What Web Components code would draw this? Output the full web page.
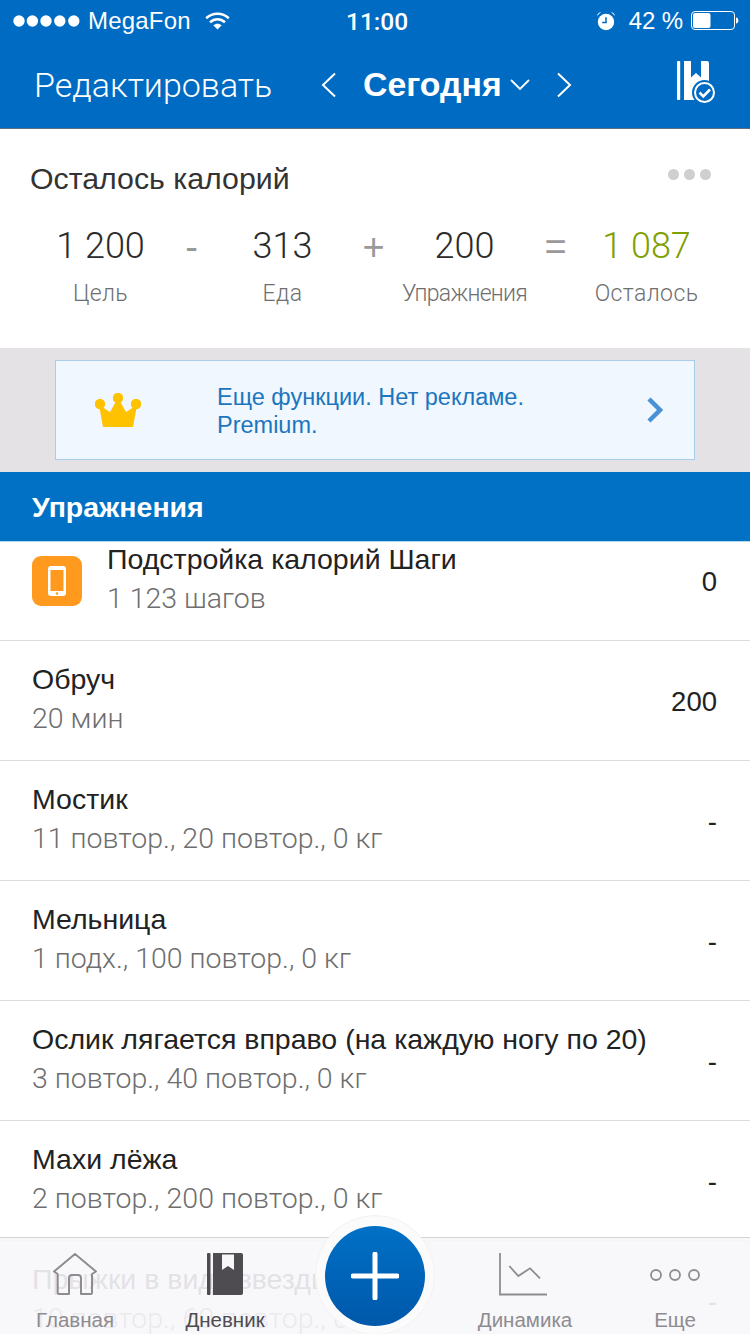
<!DOCTYPE html>
<html lang="ru">
<head>
<meta charset="utf-8">
<title>Дневник</title>
<style>
  html, body { margin: 0; padding: 0; }
  body {
    width: 750px;
    height: 1334px;
    overflow: hidden;
    position: relative;
    display: flex;
    flex-direction: column;
    background: #fff;
    font-family: "Liberation Sans", Arial, sans-serif;
  }
</style>
</head>
<body>
  <app-header></app-header>
  <calorie-summary>
    <calorie-cell value="1 200" label="Цель"></calorie-cell>
    <calorie-cell value="-" op></calorie-cell>
    <calorie-cell value="313" label="Еда"></calorie-cell>
    <calorie-cell value="+" op></calorie-cell>
    <calorie-cell value="200" label="Упражнения" style="--label-spacing: -.7px"></calorie-cell>
    <calorie-cell value="=" op></calorie-cell>
    <calorie-cell value="1 087" label="Осталось" accent></calorie-cell>
  </calorie-summary>
  <promo-banner>Еще функции. Нет рекламе.<br>Premium.</promo-banner>
  <section-header>Упражнения</section-header>
  <exercise-list>
    <exercise-row name="Подстройка калорий Шаги" detail="1 123 шагов" value="0" phone></exercise-row>
    <exercise-row name="Обруч" detail="20 мин" value="200"></exercise-row>
    <exercise-row name="Мостик" detail="11 повтор., 20 повтор., 0 кг" value="-"></exercise-row>
    <exercise-row name="Мельница" detail="1 подх., 100 повтор., 0 кг" value="-"></exercise-row>
    <exercise-row name="Ослик лягается вправо (на каждую ногу по 20)" detail="3 повтор., 40 повтор., 0 кг" value="-"></exercise-row>
    <exercise-row name="Махи лёжа" detail="2 повтор., 200 повтор., 0 кг" value="-"></exercise-row>
    <exercise-row name="Прыжки в виде звезды" detail="10 повтор., 60 повтор., 0 кг" value="-"></exercise-row>
  </exercise-list>
  <tab-bar></tab-bar>

<script>
  const define = (name, html) => {
    customElements.define(name, class extends HTMLElement {
      constructor () {
        super()
        this.attachShadow({ mode: 'open' })
        this.shadowRoot.innerHTML = typeof html === 'function' ? html(this) : html
      }
    })
  }

  define('app-header', `
    <style>
      :host { display: block; height: 129px; box-sizing: border-box; background: #006bc2; color: #fff; border-bottom: 1px solid #5c6f80; flex: none; }
      .status { display: flex; align-items: center; height: 41px; padding: 0 11px 0 13px; font-size: 24px; position: relative; }
      .carrier { margin-left: 8px; letter-spacing: .2px; }
      .wifi { margin-left: 14px; }
      .time { position: absolute; left: 346px; top: 7px; font-family: Roboto, sans-serif; font-weight: 500; font-size: 24.5px; }
      .right { margin-left: auto; display: flex; align-items: center; }
      .pct { margin: 0 8px 0 13px; letter-spacing: -.1px; }
      .nav { display: flex; align-items: center; height: 87px; padding-left: 34px; position: relative; }
      .edit { font-family: Roboto, sans-serif; font-weight: 300; font-size: 34px; width: 287px; white-space: nowrap; }
      .today { font-size: 33.8px; font-weight: 700; margin: 0 8px 0 27px; }
      .mark { position: absolute; left: 677px; top: 20px; }
      .down { margin-right: 27px; }
    </style>
    <div class="status">
      <svg width="67" height="12" viewBox="0 0 67 12" fill="#fff"><circle cx="6" cy="6" r="5.7"/><circle cx="19.4" cy="6" r="5.7"/><circle cx="33" cy="6" r="5.7"/><circle cx="46.8" cy="6" r="5.7"/><circle cx="60.8" cy="6" r="5.7"/></svg>
      <span class="carrier">MegaFon</span>
      <svg class="wifi" width="25" height="18" viewBox="0 0 25 18" fill="none" stroke="#fff" stroke-width="2.6"><path d="M1.2 6.200C7.600.2 17.400.2 23.800 6.200"/><path d="M5 10.200c4.400-4 10.600-4 15 0"/><path d="M12.500 17.600l-4.200-4.400c2.400-2.100 6-2.100 8.400 0z" fill="#fff" stroke="none"/></svg>
      <span class="time">11:00</span>
      <div class="right">
        <svg width="20" height="20" viewBox="0 0 21 21"><circle cx="10.500" cy="11.500" r="8.600" fill="#fff"/><path d="M10.500 6.500v5.500H6.500" fill="none" stroke="#006bc2" stroke-width="1.600"/><path d="M1 5.200C1.500 2.800 3.200 1.200 5.400 1zM20 5.200C19.500 2.800 17.800 1.200 15.600 1z" fill="#fff"/></svg>
        <span class="pct">42 %</span>
        <svg width="48" height="19" viewBox="0 0 48 19"><rect x=".5" y=".5" width="43" height="18" rx="3.500" fill="none" stroke="#fff"/><rect x="2" y="2" width="17.500" height="15" rx="2" fill="#fff"/><path d="M45 6.500c1.600.3 2.400 1.400 2.400 3s-.8 2.700-2.400 3z" fill="#fff"/></svg>
      </div>
    </div>
    <div class="nav">
      <span class="edit">Редактировать</span>
      <svg width="15" height="26" viewBox="0 0 15 26" fill="none" stroke="#fff" stroke-width="2"><path d="M14 1.500L2 13l12 11.500"/></svg>
      <span class="today">Сегодня</span>
      <svg class="down" width="20" height="11" viewBox="0 0 20 11" fill="none" stroke="#fff" stroke-width="1.800"><path d="M1 1l9 9 9-9"/></svg>
      <svg width="15" height="26" viewBox="0 0 15 26" fill="none" stroke="#fff" stroke-width="2"><path d="M1 1.500L13 13 1 24.500"/></svg>
      <svg class="mark" width="40" height="44" viewBox="0 0 40 44">
        <rect x="0" y="0" width="3.200" height="39" rx="1" fill="#fff"/>
        <path d="M7 0h23a2 2 0 0 1 2 2v35a2 2 0 0 1-2 2H7z" fill="#fff"/>
        <path d="M14 0h10v16.500l-5-4.500-5 4.500z" fill="#006bc2"/>
        <circle cx="27.500" cy="31.500" r="12.500" fill="#006bc2"/>
        <circle cx="27.500" cy="31.500" r="9.500" fill="#006bc2" stroke="#fff" stroke-width="2"/>
        <path d="M22.500 31.500l3.800 3.800 6.700-6.800" fill="none" stroke="#fff" stroke-width="2.600"/>
      </svg>
    </div>
  `)

  define('calorie-summary', `
    <style>
      :host { display: block; height: 219px; background: #fff; flex: none; position: relative; }
      .head { display: flex; align-items: center; justify-content: space-between; padding: 32px 39px 0 30px; height: 36px; font-size: 30.3px; color: #333; }
      .dots { display: flex; gap: 5px; margin-top: -10px; }
      .dots i { width: 11px; height: 11px; border-radius: 50%; background: #cfcfcf; }
      .cells { display: grid; grid-template-columns: repeat(7, 91px); padding: 29px 0 0 55px; }
    </style>
    <div class="head"><span>Осталось калорий</span><div class="dots"><i></i><i></i><i></i></div></div>
    <div class="cells"><slot></slot></div>
  `)

  define('calorie-cell', (el) => `
    <style>
      :host { display: flex; flex-direction: column; align-items: center; white-space: nowrap; }
      .value { font-family: Roboto, sans-serif; font-weight: 300; font-size: 36px; line-height: 40px; color: ${el.hasAttribute('accent') ? '#7fa000' : '#2b2b2b'}; }
      .op { font-family: "Liberation Sans", sans-serif; font-weight: 400; font-size: 38px; color: #999; position: relative; top: 1px; }
      .label { font-family: Roboto, sans-serif; font-weight: 300; font-size: 23px; letter-spacing: var(--label-spacing, .4px); line-height: 28px; margin-top: 14px; color: #6f6f6f; }
    </style>
    <span class="value ${el.hasAttribute('op') ? 'op' : ''}">${el.getAttribute('value')}</span>
    <span class="label">${el.getAttribute('label') || ''}</span>
  `)

  define('promo-banner', `
    <style>
      :host { display: block; height: 124px; padding: 12px 55px; box-sizing: border-box; background: #e4e2e4; flex: none; }
      .box { height: 100px; box-sizing: border-box; background: #f1f7fe; border: 1px solid #a9cde9; display: flex; align-items: center; padding-left: 39px; }
      .text { font-size: 23.500px; line-height: 28px; color: #1b76bf; margin-left: 76px; width: 430px; margin-top: 2px; }
    </style>
    <div class="box">
      <svg width="46" height="34" viewBox="0 0 46 34" fill="#fec200"><circle cx="5" cy="11" r="5.200"/><circle cx="23" cy="5" r="5.200"/><circle cx="41" cy="11" r="5.200"/><path d="M4 12l11 7 8-14 8 14 11-7-4 22H8z"/></svg>
      <div class="text"><slot></slot></div>
      <svg width="16" height="26" viewBox="0 0 16 26" fill="none" stroke="#4a90d6" stroke-width="4.500"><path d="M2 2l11 11L2 24"/></svg>
    </div>
  `)

  define('section-header', `
    <style>
      :host { display: flex; align-items: center; height: 70px; box-sizing: border-box; padding: 2px 0 0 32px; background: #0071c5; color: #fff; font-size: 28.500px; font-weight: 700; border-bottom: 1px solid #b5d8ef; flex: none; }
    </style>
    <slot></slot>
  `)

  define('exercise-list', `
    <style>
      :host { display: block; flex: 1; min-height: 0; overflow: hidden; background: #fff; }
      .scroll { margin-top: -21px; }
    </style>
    <div class="scroll"><slot></slot></div>
  `)

  define('exercise-row', (el) => `
    <style>
      :host { display: flex; align-items: center; height: 120px; box-sizing: border-box; padding: 0 33px 0 32px; border-bottom: 1px solid #dcdcdc; font-size: 28.500px; }
      .icon { flex: none; width: 50px; height: 50px; margin-right: 25px; border-radius: 9px; background: #ff9a1f; display: flex; align-items: center; justify-content: center; }
      .text { flex: 1; min-width: 0; margin-top: -3px; }
      .name { color: #222; line-height: 39px; }
      .detail { font-family: Roboto, sans-serif; font-weight: 300; color: #6e6e6e; font-size: 28.500px; line-height: 39px; }
      .value { color: #222; font-size: 27.500px; margin-top: 3px; }
    </style>
    ${el.hasAttribute('phone') ? `<div class="icon"><svg width="18" height="30" viewBox="0 0 18 30"><rect width="18" height="30" rx="3" fill="#fff"/><rect x="2.500" y="4" width="13" height="21" fill="#ff9a1f"/><circle cx="9" cy="27.500" r="1.300" fill="#ff9a1f"/></svg></div>` : ''}
    <div class="text">
      <div class="name">${el.getAttribute('name')}</div>
      <div class="detail">${el.getAttribute('detail')}</div>
    </div>
    <span class="value">${el.getAttribute('value')}</span>
  `)

  define('tab-item', (el) => `
    <style>
      :host { display: flex; flex-direction: column; align-items: center; justify-content: flex-end; width: 150px; height: 100%; box-sizing: border-box; padding-bottom: 2px; font-size: 20.500px; color: ${el.hasAttribute('active') ? '#4e4c50' : '#8e8c90'}; }
      .ic { height: 43px; display: flex; align-items: center; margin-bottom: 12px; }
      .label { line-height: 24px; }
    </style>
    <div class="ic"><slot></slot></div>
    <span class="label">${el.getAttribute('label')}</span>
  `)

  define('tab-bar', `
    <style>
      :host { position: absolute; left: 0; right: 0; bottom: 0; height: 97px; box-sizing: border-box; background: rgba(247,246,249,.9); border-top: 1px solid #d4d3d6; display: flex; }
      .gap { flex: none; width: 150px; }
      .plus { position: absolute; left: 315px; top: -23px; width: 120px; height: 120px; box-sizing: border-box; padding-top: 2px; border-radius: 50%; background: #fbfbfc; border: 1px solid #f2f2f4; display: flex; align-items: center; justify-content: center; }
      .disc { width: 100px; height: 100px; border-radius: 50%; background: linear-gradient(180deg, #0070c6, #0058aa); display: flex; align-items: center; justify-content: center; }
      .chart { margin-left: -4px; }
    </style>
    <tab-item label="Главная">
      <svg width="44" height="43" viewBox="0 0 44 43" fill="none" stroke="#8e8c90" stroke-width="2" stroke-linejoin="round"><path d="M22 1L1 18.500 4.700 21V40a1 1 0 0 0 1 1H16V25a3 3 0 0 1 3-3h6a3 3 0 0 1 3 3V41h10a1 1 0 0 0 1-1V21l4-2.500z"/></svg>
    </tab-item>
    <tab-item label="Дневник" active>
      <svg width="36" height="43" viewBox="0 0 36 43" fill="#4e4c50"><rect width="3.500" height="42" rx="1"/><path d="M6 0h28a2 2 0 0 1 2 2v38a2 2 0 0 1-2 2H6z"/><path d="M15 1.500h12V17l-6-4-6 4z" fill="#f7f6f9"/></svg>
    </tab-item>
    <div class="gap"></div>
    <tab-item label="Динамика">
      <svg class="chart" width="48" height="43" viewBox="0 0 48 43" fill="none" stroke="#8e8c90" stroke-width="1.800"><path d="M1 0v41.500h47"/><path d="M10.300 13l9 10 11.700-7.700 10 10"/></svg>
    </tab-item>
    <tab-item label="Еще">
      <svg width="52" height="14" viewBox="0 0 52 14" fill="none" stroke="#8e8c90" stroke-width="1.800"><circle cx="7" cy="7" r="5"/><circle cx="26" cy="7" r="5"/><circle cx="45" cy="7" r="5"/></svg>
    </tab-item>
    <div class="plus"><div class="disc"><svg width="48" height="48" viewBox="0 0 48 48"><path d="M24 2v44M2 24h44" stroke="#fff" stroke-width="5" stroke-linecap="round"/></svg></div></div>
  `)
</script>
</body>
</html>
